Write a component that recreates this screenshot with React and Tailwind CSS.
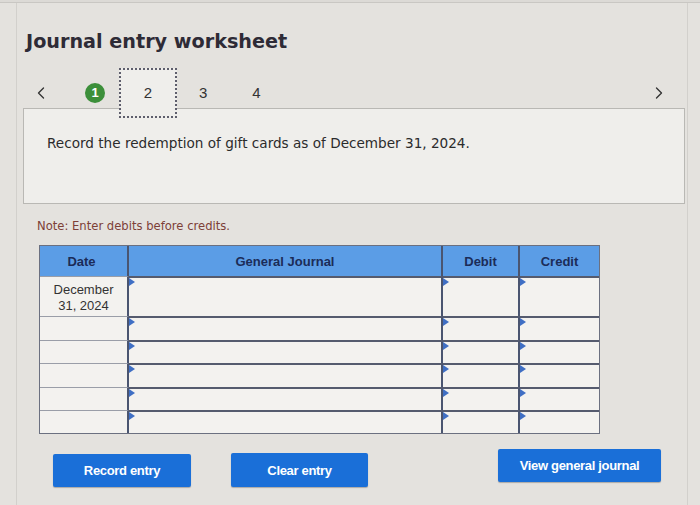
import { ChevronLeft, ChevronRight } from "lucide-react";

const filas = [40, 24, 23, 24, 23, 23];

function Marca() {
  return (
    <span className="absolute left-0 top-0 h-0 w-0 border-y-[4px] border-l-[6px] border-y-transparent border-l-[#3f6fc4]" />
  );
}

function Tabla() {
  return (
    <div className="ml-[38px] w-[561px] border border-[#6b7080] font-['Liberation_Sans',Arial,sans-serif]">
      <div className="grid h-[30px] grid-cols-[89px_314px_77px_79px] bg-[#5b9de6] text-[13px] font-bold text-[#1b2c58]">
        <div className="flex items-center justify-center border-r-2 border-[#4a5570] pr-1">Date</div>
        <div className="flex items-center justify-center border-r-2 border-[#4a5570]">General Journal</div>
        <div className="flex items-center justify-center border-r-2 border-[#4a5570]">Debit</div>
        <div className="flex items-center justify-center">Credit</div>
      </div>
      {filas.map((alto, i) => (
        <div
          key={i}
          className="grid grid-cols-[89px_314px_77px_79px] bg-[#f3f2ef]"
          style={{ height: alto }}
        >
          <div className="border-r-2 border-t border-r-[#4a5570] border-t-[#9a9ea8] pt-[5px] text-center text-[13px] leading-[16px] text-[#333]">
            {i === 0 ? (
              <>
                December
                <br />
                31, 2024
              </>
            ) : null}
          </div>
          <div className="relative border-r-2 border-t-2 border-r-[#4a5570] border-t-[#555b6e]">
            <Marca />
          </div>
          <div className="relative border-r-2 border-t-2 border-r-[#4a5570] border-t-[#555b6e]">
            <Marca />
          </div>
          <div className="relative border-t-2 border-t-[#555b6e]">
            <Marca />
          </div>
        </div>
      ))}
    </div>
  );
}

function Boton({ children, className }) {
  return (
    <button
      className={
        "flex items-center justify-center rounded-[2px] bg-[#1a6fd8] font-['Liberation_Sans',Arial,sans-serif] text-[13px] font-bold tracking-tight text-white shadow-[0_1px_1px_rgba(0,0,0,0.25)] " +
        className
      }
    >
      {children}
    </button>
  );
}

export default function App() {
  return (
    <div className="h-[505px] w-[700px] overflow-hidden bg-[#e4e2de]">
      <div className="h-[3px] border-b border-[#c9c7c3] bg-[#dcdad6]" />
      <div className="mr-[12px] ml-[16px] h-[502px] border-l border-r border-[#d2d0cc]">
        <h1 className="pt-[25px] pl-[9px] font-['DejaVu_Sans',Verdana,sans-serif] text-[19.2px] font-bold leading-[28px] text-[#2e2b36]">
          Journal entry worksheet
        </h1>

        <div className="relative z-10 mt-[12px] flex h-[50px] items-center font-['Liberation_Sans',Arial,sans-serif] text-[15px] text-[#333]">
          <ChevronLeft className="ml-[14px] h-[20px] w-[20px] text-[#333]" strokeWidth={1.6} />
          <span className="ml-[34px] flex h-[20px] w-[20px] items-center justify-center rounded-full bg-[#3c8f3a] text-[13px] font-bold text-white">
            1
          </span>
          <span className="ml-[14px] flex h-[50px] w-[58px] items-center justify-center border-2 border-dotted border-[#5e5e6c] bg-[#efeeeb]">
            2
          </span>
          <span className="ml-[22px]">3</span>
          <span className="ml-[45px]">4</span>
          <ChevronRight className="ml-auto mr-[18px] h-[20px] w-[20px] text-[#333]" strokeWidth={1.6} />
        </div>

        <div className="-mt-[10px] ml-[6px] mr-[2px] h-[96px] border border-[#b9b8b4] bg-[#efeeeb] pl-[23px] pt-[24px] font-['DejaVu_Sans',Verdana,sans-serif] text-[13.6px] text-[#2b2b2b]">
          Record the redemption of gift cards as of December 31, 2024.
        </div>

        <p className="mt-[14px] pl-[20px] font-['DejaVu_Sans',Verdana,sans-serif] text-[11.6px] text-[#7d4038]">
          Note: Enter debits before credits.
        </p>

        <div className="mt-[10px] -ml-[16px]">
          <Tabla />
        </div>

        <div className="mt-[15px] flex items-start">
          <Boton className="ml-[36px] mt-[5px] h-[33px] w-[138px]">Record entry</Boton>
          <Boton className="ml-[40px] mt-[4px] h-[34px] w-[137px]">Clear entry</Boton>
          <Boton className="ml-[130px] h-[33px] w-[163px]">View general journal</Boton>
        </div>
      </div>
    </div>
  );
}
